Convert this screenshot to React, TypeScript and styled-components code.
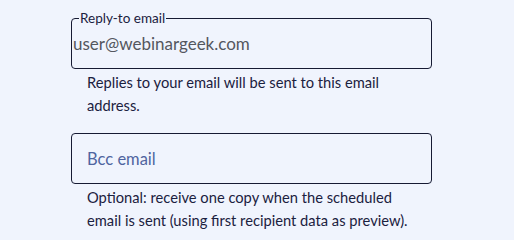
import React from "react";
import styled, { createGlobalStyle } from "styled-components";

const Global = createGlobalStyle`
  html, body { margin: 0; padding: 0; background: #f0f4fd; }
  body { font-family: Lato, Inter, sans-serif; }
`;

const Page = styled.div`
  width: 514px;
  height: 240px;
  box-sizing: border-box;
  padding: 10px 0 0 71px;
  display: flex;
  flex-direction: column;
  gap: 16px;
`;

const Field = styled.div`
  width: 361px;
  display: flex;
  flex-direction: column;
`;

const Outline = styled.fieldset`
  margin: 0;
  height: 59px;
  box-sizing: border-box;
  border: 1px solid #161a33;
  border-radius: 4px;
  padding: 0 0 0 1px;
  display: flex;
  align-items: flex-start;
`;

const Legend = styled.legend`
  font-size: 13.5px;
  color: #1b2140;
  padding: 0 1px;
  margin-left: 6px;
  line-height: 16px;
`;

const Box = styled.div`
  height: 51px;
  box-sizing: border-box;
  border: 1px solid #161a33;
  border-radius: 4px;
  display: flex;
  align-items: center;
  padding-left: 15px;
`;

const Input = styled.input<{ $muted?: boolean }>`
  border: none;
  outline: none;
  background: transparent;
  font-family: Lato, Inter, sans-serif;
  font-size: ${(p) => (p.$muted ? "16.5px" : "17px")};
  padding: 0;
  width: 100%;
  color: #54575f;
  margin-top: ${(p) => (p.$muted ? "0" : "7px")};
  &::placeholder { color: #4f64a0; opacity: 1; }
`;

const Help = styled.p`
  margin: 0;
  padding: 2px 0 0 16px;
  width: 330px;
  font-size: 14.7px;
  line-height: 23px;
  color: #1b2140;
`;

export default function App() {
  return (
    <>
      <Global />
      <Page>
        <Field>
          <Outline>
            <Legend>Reply-to email</Legend>
            <Input defaultValue="user@webinargeek.com" />
          </Outline>
          <Help>Replies to your email will be sent to this email address.</Help>
        </Field>
        <Field>
          <Box>
            <Input $muted placeholder="Bcc email" />
          </Box>
          <Help>Optional: receive one copy when the scheduled email is sent (using first recipient data as preview).</Help>
        </Field>
      </Page>
    </>
  );
}
